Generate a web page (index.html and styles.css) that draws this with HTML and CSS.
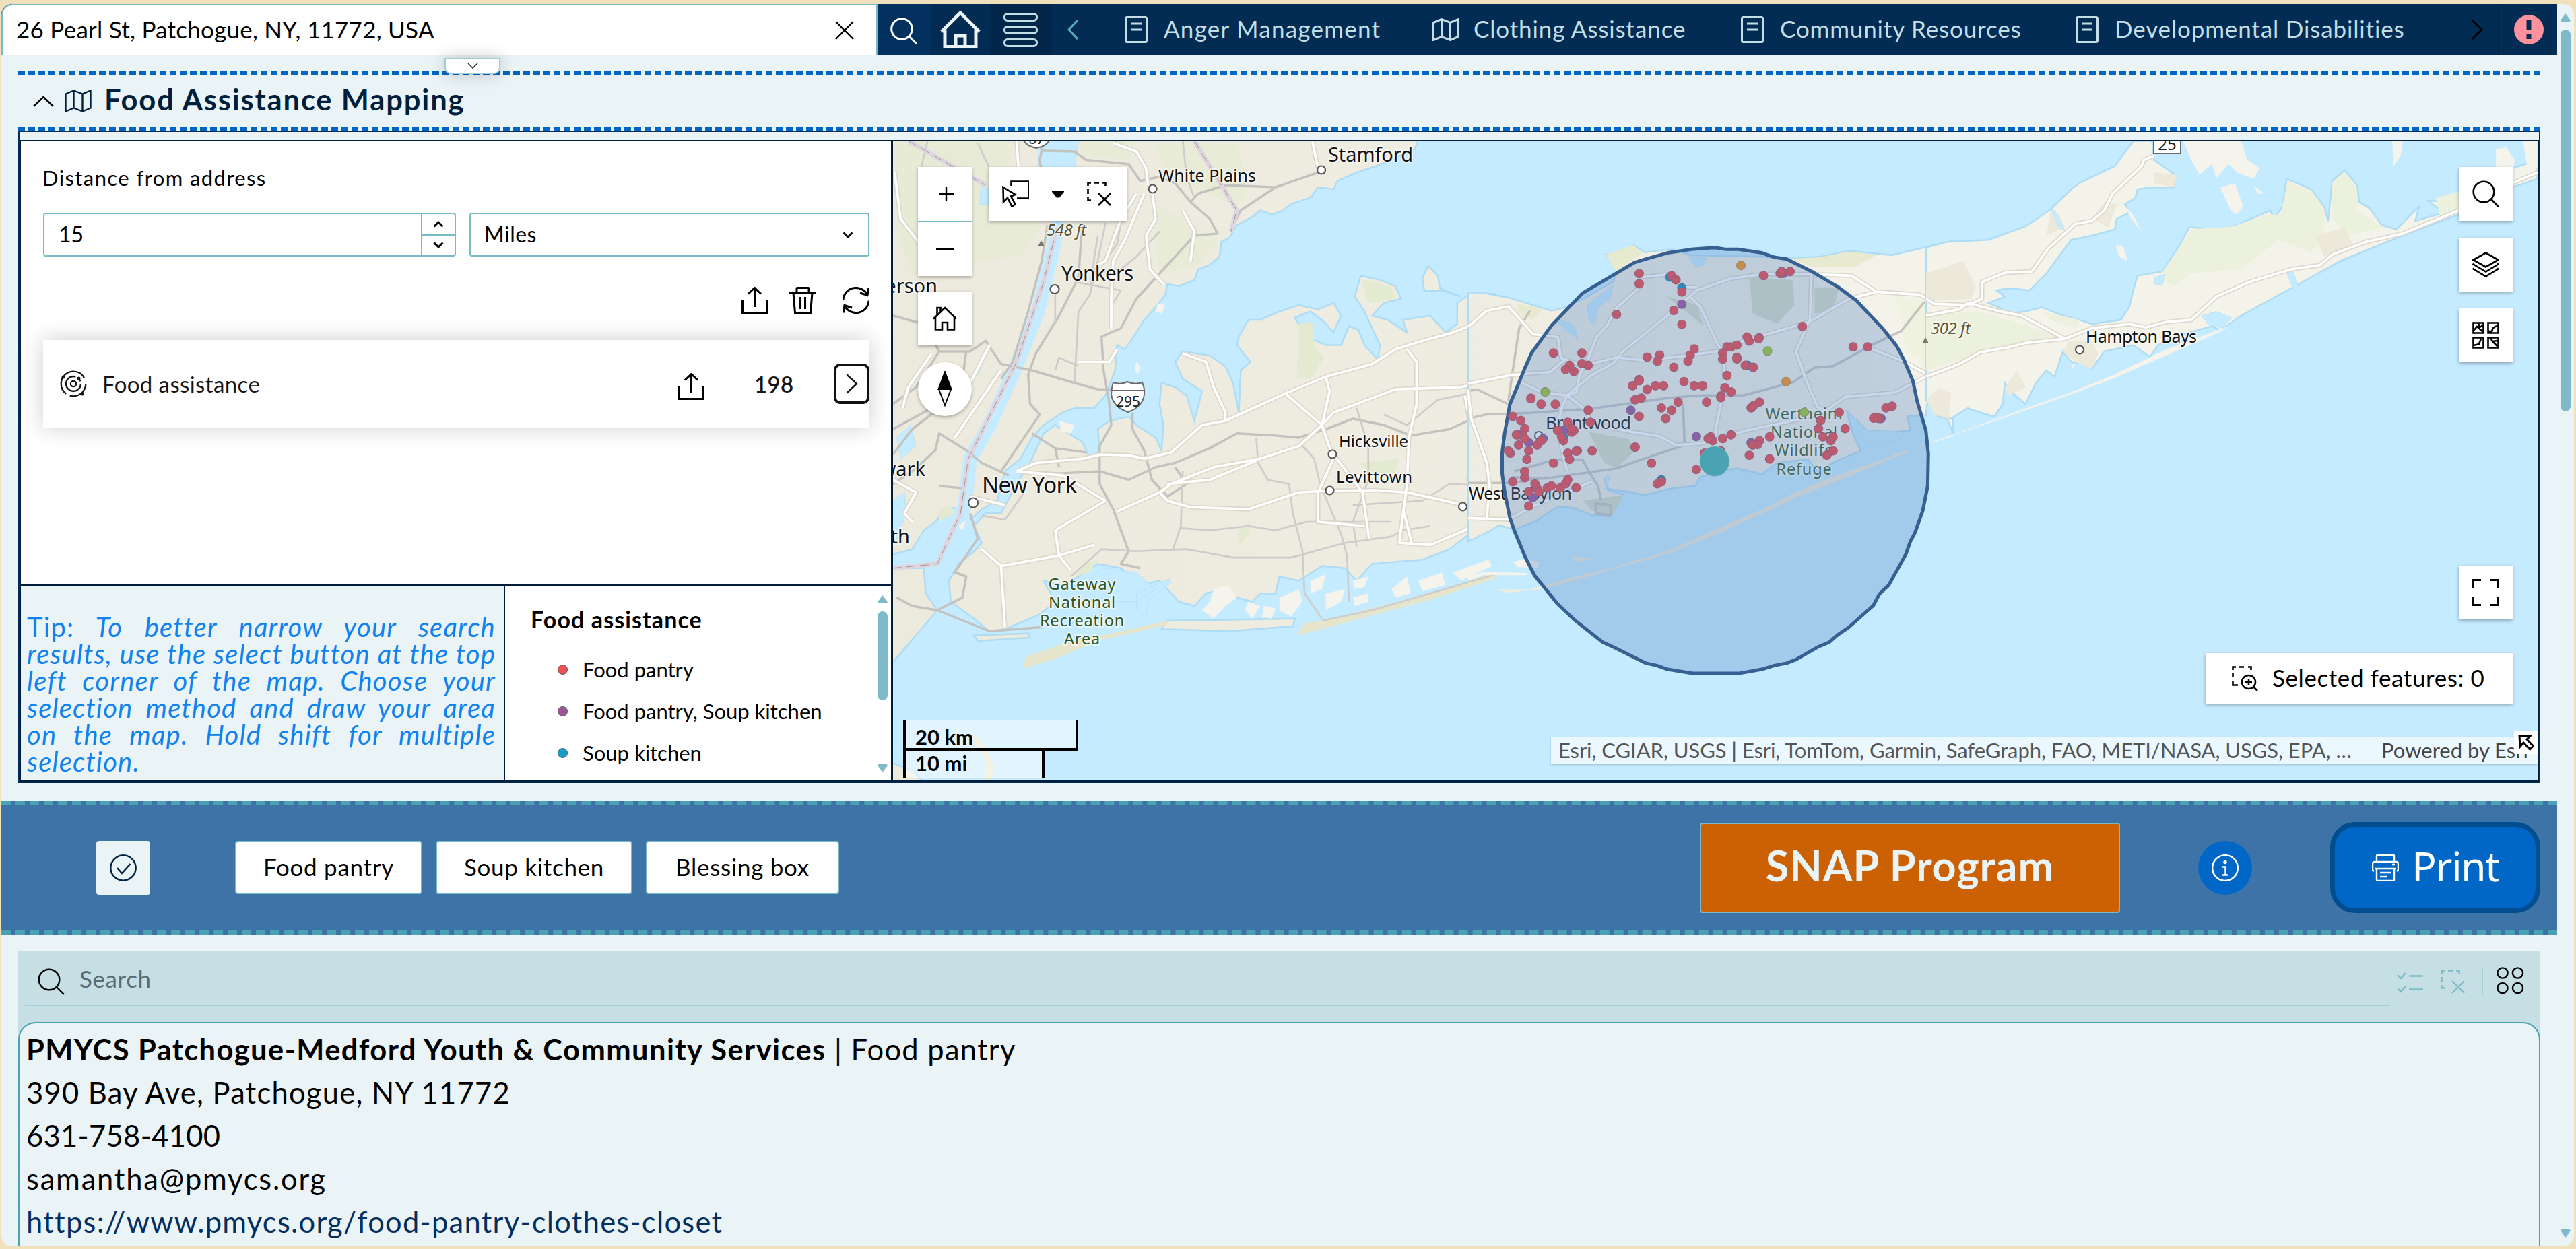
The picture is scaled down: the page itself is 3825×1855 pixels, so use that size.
FILE: index.html
```html
<!DOCTYPE html>
<html lang="en">
<head>
<meta charset="utf-8">
<title>Food Assistance Mapping</title>
<link rel="stylesheet" href="styles.css">
</head>
<body>
<svg class="defs" width="0" height="0">
  <symbol id="i-search" viewBox="0 0 40 40"><circle cx="17" cy="17" r="15.3"/><path d="M28 28l11 11"/></symbol>
  <symbol id="i-map" viewBox="0 0 40 34"><path d="M1.5 6.500l12-5 13 5 12-5v26l-12 5-13-5-12 5zM13.500 1.500v26M26.500 6.500v26"/></symbol>
  <symbol id="i-doc" viewBox="0 0 34 40"><rect x="1.500" y="1.500" width="31" height="37" rx="2"/><path d="M9 11h16M9 20h16"/></symbol>
  <symbol id="i-upload" viewBox="0 0 40 40"><path d="M1.500 20v18.500h36V20M19.500 30V2M10 10.500l9.500-9 9.500 9"/></symbol>
  <symbol id="i-unselect" viewBox="0 0 36 36"><path d="M1.500 6V1.500H6M11 1.500h7M23 1.500h4.500V6M1.500 11v7M1.500 23v4.500H6M17 17l18 18M35 17L17 35"/></symbol>
</svg>
<div class="frame">
  <main class="main">
    <header class="topbar">
      <div class="address"><span class="t address-text">26 Pearl St, Patchogue, NY, 11772, USA</span>
        <svg class="clear" viewBox="0 0 28 28"><path d="M1 1l26 26M27 1L1 27"/></svg></div>
      <div class="top-search"><svg width="40" height="40"><use href="#i-search"/></svg></div>
      <div class="top-home"><svg width="60" height="56" viewBox="0 0 60 56"><path d="M2 31L30 3l28 28M7 27v26.500h46V27M23 53V37h14v16"/></svg></div>
      <div class="top-menu"><i></i><i></i><i></i></div>
      <nav class="nav">
        <svg class="nav-prev" viewBox="0 0 16 30"><path d="M15 1L2 15l13 14"/></svg>
        <a class="n1"><svg width="34" height="40"><use href="#i-doc"/></svg><span class="t">Anger Management</span></a>
        <a class="n2"><svg width="40" height="34"><use href="#i-map"/></svg><span class="t">Clothing Assistance</span></a>
        <a class="n3"><svg width="34" height="40"><use href="#i-doc"/></svg><span class="t">Community Resources</span></a>
        <a class="n4"><svg width="34" height="40"><use href="#i-doc"/></svg><span class="t">Developmental Disabilities</span></a>
        <svg class="nav-next" viewBox="0 0 18 30"><path d="M2 1l14 14L2 29"/></svg>
      </nav>
      <div class="alert"><svg width="44" height="44" viewBox="0 0 44 44"><circle cx="22" cy="22" r="22"/><path d="M18.500 7h7v16h-7zM18.500 29h7v7h-7z"/></svg></div>
      <div class="pull-tab"><svg width="16" height="9" viewBox="0 0 16 9"><path d="M1 1l7 7 7-7"/></svg></div>
    </header>

    <section class="title-row">
      <svg class="fold" viewBox="0 0 31 17"><path d="M1 16L15.500 2 30 16"/></svg>
      <svg class="title-map" width="40" height="34"><use href="#i-map"/></svg>
      <h1 class="t">Food Assistance Mapping</h1>
    </section>

    <section class="workspace">
      <div class="panes">
        <div class="left">
          <div class="query">
            <label class="t">Distance from address</label>
            <div class="fields">
              <div class="number"><span class="t">15</span><div class="steps">
                <b><svg width="16" height="10" viewBox="0 0 16 10"><path d="M1.500 8.500L8 2l6.500 6.500"/></svg></b>
                <b><svg width="16" height="10" viewBox="0 0 16 10"><path d="M1.500 1.500L8 8l6.500-6.500"/></svg></b></div></div>
              <div class="select"><span class="t">Miles</span><svg width="16" height="10" viewBox="0 0 16 10"><path d="M1.500 1.500L8 8l6.500-6.500"/></svg></div>
            </div>
            <div class="actions">
              <svg width="40" height="40"><use href="#i-upload"/></svg>
              <svg width="40" height="40" viewBox="0 0 40 40"><path d="M0 8.500h40M11 8V2.500q0-1 1-1h16q1 0 1 1V8M6 9l2.500 29.500h23L34 9M16.500 15v18M23.500 15v18"/></svg>
              <svg width="40" height="40" viewBox="0 0 40 40"><path d="M1 19.500A19 19 0 0 1 37 12M38.800 1.500L37 12.500l-11-3.500M39 20.500A19 19 0 0 1 3 28M1.200 38.500L3 27.500 14 31"/></svg>
            </div>
            <div class="result">
              <svg class="target" width="40" height="40" viewBox="0 0 40 40"><circle cx="20" cy="20" r="4.200"/><circle cx="20" cy="20" r="11" stroke-dasharray="55 6 4 4.100"/><circle cx="20" cy="20" r="18.300" stroke-dasharray="34 6 65 10"/><circle class="dot" cx="28" cy="12" r="2.500"/><circle class="dot" cx="5" cy="10" r="2.500"/><circle class="dot" cx="33" cy="35" r="2.500"/></svg>
              <span class="t result-name">Food assistance</span>
              <svg class="result-up" width="40" height="40"><use href="#i-upload"/></svg>
              <span class="t result-count">198</span>
              <div class="result-open"><svg width="18" height="30" viewBox="0 0 18 30"><path d="M1.500 1.500L16 15 1.500 28.500"/></svg></div>
            </div>
          </div>
          <div class="lower">
            <div class="tip">
              <div><span class="upright">Tip:</span> To better narrow your search</div>
              <div>results, use the select button at the top</div>
              <div>left corner of the map. Choose your</div>
              <div>selection method and draw your area</div>
              <div>on the map. Hold shift for multiple</div>
              <div class="last"><span class="t">selection.</span></div>
            </div>
            <div class="legend">
              <div class="legend-body">
                <h2><span class="t">Food assistance</span></h2>
                <p><i class="red"></i><span class="t">Food pantry</span></p>
                <p><i class="purple"></i><span class="t">Food pantry, Soup kitchen</span></p>
                <p><i class="blue"></i><span class="t">Soup kitchen</span></p>
              </div>
              <div class="bar legend-bar"><i class="up"></i><i class="thumb"></i><i class="down"></i></div>
            </div>
          </div>
        </div>
        <div class="map">
          <svg class="basemap" viewBox="1326 210 2442 949">
            <defs>
              <linearGradient id="land" gradientUnits="userSpaceOnUse" x1="0" y1="0" x2="1568" y2="0"><stop offset="0" stop-color="#ece9dd"/><stop offset="1" stop-color="#efece1"/></linearGradient>
              <linearGradient id="land-mid" gradientUnits="userSpaceOnUse" x1="0" y1="0" x2="1568" y2="0"><stop offset="0" stop-color="#efece1"/><stop offset="1" stop-color="#f4f3ea"/></linearGradient>
              <marker id="m-red" markerUnits="userSpaceOnUse" markerWidth="34" markerHeight="36" refX="17" refY="18"><ellipse cx="17" cy="18" rx="14" ry="14.800" fill="#be5a6f" stroke="#96607c" stroke-width="2.500"/></marker>
              <marker id="m-blue" markerUnits="userSpaceOnUse" markerWidth="34" markerHeight="36" refX="17" refY="18"><ellipse cx="17" cy="18" rx="14" ry="14.800" fill="#2b8abd" stroke="#46799f" stroke-width="2.500"/></marker>
              <marker id="m-purple" markerUnits="userSpaceOnUse" markerWidth="34" markerHeight="36" refX="17" refY="18"><ellipse cx="17" cy="18" rx="14" ry="14.800" fill="#8862a8" stroke="#776596" stroke-width="2.500"/></marker>
              <marker id="m-orange" markerUnits="userSpaceOnUse" markerWidth="34" markerHeight="36" refX="17" refY="18"><ellipse cx="17" cy="18" rx="14" ry="14.800" fill="#c98c4c" stroke="#9a8068" stroke-width="2.500"/></marker>
              <marker id="m-green" markerUnits="userSpaceOnUse" markerWidth="34" markerHeight="36" refX="17" refY="18"><ellipse cx="17" cy="18" rx="14" ry="14.800" fill="#89b05c" stroke="#78936c" stroke-width="2.500"/></marker>
            </defs>
            <rect x="1326" y="210" width="2442" height="949" fill="#c4ebff"/>
            <!-- New York and western Long Island -->
            <g transform="translate(1320 200) scale(.574 .625)">
              <g class="land">
                <path d="M0 0H1375L1360 35 1310 55 1260 75 1210 90 1160 110 1150 130 1110 125 1090 150 1040 165 1020 180 990 190 960 180 940 195 900 215 880 245 860 255 855 290 830 310 800 320 790 345 750 360 720 355 715 380 690 410 660 440 640 470 610 510 590 500 585 560 560 620 530 650 480 650 450 660 400 690 370 720 340 770 300 800 280 870 240 890 210 915 190 890 150 885 120 920 90 940 60 985 0 1000Z"/>
                <path d="M290 900L330 830 370 770 400 710 430 690 500 730 520 770 545 750 540 700 570 680 620 670 640 690 690 720 705 750 710 690 700 640 705 590 740 600 770 620 790 680 810 610 760 580 740 540 760 515 830 525 870 550 890 590 905 660 910 560 935 540 900 500 905 480 930 440 960 440 1010 420 1060 405 1110 415 1150 400 1170 430 1150 470 1120 440 1090 420 1050 435 1080 480 1130 500 1170 500 1190 455 1215 465 1230 500 1265 535 1270 500 1250 460 1230 420 1205 385 1220 335 1270 345 1310 360 1325 390 1280 400 1250 430 1290 440 1340 470 1330 440 1400 430 1440 470 1470 450 1470 400 1500 380 1568 378V935L1530 920 1500 950 1450 985 1380 1010 1310 1015 1250 1020 1210 1060 1180 1030 1120 1025 1060 1060 1010 1050 1000 1090 960 1090 940 1110 900 1100 870 1080 820 1090 790 1120 750 1110 700 1060 650 1070 600 1030 540 1020 490 1050 450 1070 400 1060 430 1110 390 1140 300 1175 260 1180 220 1150 160 1110 155 1060 180 1020 220 990 240 970 220 930 250 900Z"/>
                <path d="M0 1030L90 1030 95 1090 125 1130 60 1200 0 1265ZM220 1190L360 1185 365 1195 230 1203ZM705 1175L720 1155 1050 1150 1045 1168 880 1180ZM1380 340L1395 312 1420 335 1425 365 1480 385 1430 370 1385 372ZM0 1490L60 1510 90 1540 0 1540Z"/>
              </g>
              <path fill="#e6e5cb" d="M345 1270L355 1240 450 1210 600 1180 720 1155 720 1165 550 1200 430 1245ZM1055 1190L1075 1160 1130 1155 1250 1125 1400 1090 1568 1040V1055L1400 1105 1200 1155ZM210 1420L240 1440 270 1500 265 1535 245 1530 250 1490Z"/>
              <path fill="#e6ebd3" d="M10 15H320L300 150 390 220 340 290 200 300 60 330 10 200ZM490 15H640L620 60 500 50ZM690 20H900L930 130 900 170 720 100ZM680 160L850 250 800 310 700 330Z" opacity=".75"/>
              <path fill="#e3ead0" d="M1060 450L1095 445 1100 500 1125 530 1090 580 1055 580ZM1225 345L1300 360 1310 390 1240 400ZM1215 780L1320 770 1310 800 1270 825ZM905 940L935 920 930 950 905 975ZM1490 810L1510 812 1505 825 1490 822ZM130 890L160 880 170 900 130 920ZM500 1020L540 1010 520 1040 480 1050Z"/>
              <path class="water" d="M388 15H490L480 82 395 100 385 60ZM238 120L260 130 262 168 235 165ZM550 1030L640 1040 690 1080 640 1110 560 1110 500 1080ZM640 1090L725 1055 730 1065 670 1105 665 1145 640 1130ZM10 870L40 850 45 900 20 960 10 960ZM20 720L55 690 70 740 30 770ZM255 500L262 505 230 570 215 580Z"/>
              <path fill="none" stroke="#c4ebff" stroke-width="36" d="M440 200L425 270 385 420 325 560 260 690 210 770 200 850 185 940"/>
              <path class="land2" d="M440 680L480 690 470 710 445 705ZM840 1080L880 1070 900 1100 870 1120 840 1150 810 1130 830 1110ZM930 1110L960 1120 940 1150 920 1130ZM1010 1100L1060 1080 1070 1110 1040 1145 1010 1130ZM1090 1060L1130 1045 1120 1080 1090 1090ZM1130 1090L1180 1080 1170 1110 1130 1130ZM1200 1060L1240 1050 1230 1075 1205 1080ZM1200 1100L1240 1090 1240 1110 1205 1120ZM1300 1080L1340 1050 1350 1090 1310 1100ZM1370 1060L1430 1040 1440 1070 1380 1085ZM1460 1040L1550 1010 1560 1025 1480 1060ZM640 540L650 550 645 570 635 560ZM695 400L715 405 705 425 690 420ZM180 930L200 915 190 940ZM970 1120L1000 1125 990 1150 965 1145Z"/>
              <g class="gray">
                <path d="M10 430L90 450 130 515 210 515 250 490 290 545 370 560 480 590 540 605 575 605M390 15L395 38 480 40 510 60 620 70 650 110 700 100 740 115 780 160 830 200 850 235 790 240 740 290 640 390 600 460 550 480 555 560 570 640 575 690 545 740 545 830 580 890 620 990 600 1020 650 1030M400 15L390 60 405 150M410 215L395 300 360 420 320 540 290 580M500 210L490 340 440 430 380 520 360 570 365 640 390 665 290 800M370 710L430 745 510 755M430 745L440 790M345 800L440 805 545 800 620 820 690 790 740 780 830 745 900 710 1000 715 1060 720 1130 700 1200 675 1280 690 1350 715 1450 700 1520 670 1568 665M630 660L630 700 660 750 680 820 720 860 770 830 740 790"/>
                <path d="M780 160L800 140 870 120 1000 125 1110 90M890 215L910 180 1000 125M10 760L60 700 130 650 200 600M10 830L60 800 120 750 130 710 200 750 240 780 310 810M130 835L190 840M20 1100L60 1120 125 1130 190 1100 200 1050 170 1040 230 960 210 900M125 1130L260 1180 400 1170M130 515L70 600 10 640M200 515L190 580 130 640 10 700"/>
              </g>
              <g class="gray thin">
                <path d="M470 1050L550 985 640 990 770 985 890 1005 1040 1005 1180 970 1300 955 1330 940 1400 930M760 800L755 930 735 985M755 935L830 940 930 930 1000 940 1080 920 1300 920M950 720L955 780 980 820 1035 830 1045 900 1070 990 1075 1090 1120 1150M1070 740L1100 770 1115 830 1170 950 1185 1000 1190 1110M1210 650L1240 740 1240 820 1200 920 1210 980M1200 880L1380 870 1450 830 1568 835M1280 665L1340 690 1420 630 1500 615 1568 625M560 210L540 300 520 380 490 420 480 590M600 210L590 260 560 300M430 560L440 530 490 550M430 450L430 360M480 350L600 370 580 400M540 240L520 360M700 230L640 290 600 320 530 330M100 15L80 90M230 20L270 100M1120 1155L1250 1130 1400 1090 1568 1045M240 905L300 915 350 850M760 15L770 100 790 150"/>
              </g>
              <g class="casing"><path id="wa" d="M330 800L380 780 500 770 550 760 620 762 660 770 730 755 810 690 870 680 1025 615 1130 575 1250 545 1310 510 1380 490 1460 470 1500 455 1568 415M330 800L450 810 560 870M590 895L700 850 730 830 840 790 960 770 1060 740 1120 690 1150 660 1210 640 1310 605 1480 600 1568 580M720 830L830 820 950 775M700 850L720 870 780 885 930 890 1060 850 1140 846 1260 845 1340 850 1440 870 1485 880M1130 575L1140 610 1120 690 1150 770 1110 850 1110 920 1230 930M1150 760L1225 850 1242 960M1025 615L1120 690M1340 510L1365 540 1365 640 1345 720 1340 830 1320 970 1400 975 1490 940 1530 910 1568 915M1330 890L1352 970M560 870L430 940 440 1000 290 1025 300 1170M240 985L290 1025M440 1000L530 975M440 1000L470 1035M575 380V460M490 540H570L590 510M760 520L820 540 840 600 870 660V680M1490 620L1510 720 1540 820 1550 900M640 140L600 200 560 300 540 310M660 140L610 250 580 300 575 380M680 130L690 200 665 240 675 320 710 355M580 20L640 40 665 80 670 120M330 15L335 80M1095 15L1110 80M760 180L790 230 780 300M15 90L30 200 80 260M110 520L50 600 35 650M260 500L210 590M290 560L170 720M10 820L70 850 40 900 60 920M210 860L300 880"/></g>
              <use href="#wa" class="white"/>
              <path class="border" d="M50 15L250 120M435 220L400 350 330 540 205 770 185 900 125 1020 10 1030M790 15L900 180 885 230"/>
              <path class="border-line" d="M50 15L250 120M435 220L400 350 330 540 205 770 185 900 125 1020 10 1030M790 15L900 180 885 230"/>
            </g>
            <!-- Suffolk County -->
            <g transform="translate(2180 340) scale(.4592 .4337)">
              <g class="land mid">
                <path d="M0 218L45 218 130 235 270 280 310 270 380 235 470 180 480 140 445 88 490 85 535 55 570 80 660 70 720 90 950 95 1050 100 1140 95 1230 75 1370 90 1568 40V700L1530 600 1520 555 1490 545 1480 640 1420 640 1430 690 1380 695 1290 690 1225 625 1240 690 1270 760 1200 790 1130 830 1100 790 1000 800 950 840 870 820 800 830 750 850 735 880 650 890 570 912 520 900 450 890 440 850 455 895 500 910 470 960 460 985 400 980 340 955 290 950 220 1000 150 1030 100 1015 60 1040 0 1070Z"/>
              </g>
              <path fill="#e8ead0" d="M445 88L535 55 560 85 500 130 480 150ZM1040 102L1140 97 1230 77 1320 90 1250 130 1110 130ZM160 255L240 275 210 310 160 290Z"/>
              <path fill="#eef2df" d="M1380 230L1500 250 1540 360 1500 480 1420 420Z"/>
              <path fill="#d5dcc5" d="M910 165L1050 175 1055 260 1000 325 920 290ZM1120 200L1200 200 1180 280 1120 290ZM390 695L520 720 540 760 480 820 440 800ZM370 930L480 915 500 915 465 985 400 965ZM640 230L740 260 760 330 700 280Z"/>
              <path class="water" d="M385 260L470 190 460 240 420 270 410 330 390 310ZM280 310L330 320 350 350 356 378 320 350ZM710 95L770 100 760 125 735 130ZM1225 625L1290 690 1380 692 1400 720 1300 740 1250 700ZM440 850L460 840 450 885Z"/>
              <path fill="#efeddd" d="M75 1235L200 1235 350 1190 480 1155 650 1100 820 1020 950 960 1060 900 1200 840 1340 790 1420 755 1420 765 1250 840 1050 925 850 1025 660 1108 450 1172 250 1232 130 1245ZM330 1120L400 1130 360 1140Z"/>
              <path class="land2" d="M0 1190L50 1175 190 1178 190 1186 50 1186 0 1205ZM145 1140L180 1130 230 1140 225 1160 160 1158ZM1420 757L1568 705V710ZM20 1150L70 1135 60 1160Z"/>
              <g class="gray"><path d="M0 650L60 635 200 630 400 615 640 580 750 570 890 570 1050 525 1120 475 1180 470 1310 395 1400 350 1475 250M140 850L250 855 480 820 560 790 700 740 695 600M150 830L280 790 370 790 390 830 420 880 430 930M410 940L460 945 462 980 415 975ZM130 600L30 550 0 555M130 590L145 480 165 340 200 280M0 870H140L260 850"/></g>
              <g class="casing"><path id="wb" d="M0 335L60 280 130 265 210 360 290 370 300 440 310 450 265 490 140 500 0 530M300 440L370 470 480 440 570 450 700 435 830 415 840 405 900 380 1100 320 1230 240 1320 215 1460 225 1510 255 1568 265M160 520L240 560 320 570 400 500 470 460 500 420 640 300 740 210 850 170 950 155 1120 155 1240 160 1320 215M560 165L650 155 700 200 740 200M555 200L480 270 450 330 415 370 390 440 360 500 350 560 320 570 300 620 290 690 320 830M715 230L750 265 800 380 825 430 830 530 800 690 800 710M1110 160L1105 310 1060 420 1090 510 1130 610 1170 630M320 570L380 620 400 670 530 695 620 710 670 740 750 735 900 690 1060 655 1160 620 1220 575 1380 560 1490 500 1568 460M1290 405L1400 450 1490 500M0 990L130 995 210 950 400 865M0 550L10 650 60 800 70 880 60 990"/></g>
              <use href="#wb" class="white"/>
            </g>
            <!-- North and South Forks -->
            <g transform="translate(2860 200) scale(.6154 .625)">
              <g class="land east">
                <path d="M0 268L50 255 150 250 240 218 300 178 350 130 370 115 455 75 500 15 545 15 550 60 600 95 600 125 540 125 510 130 505 150 480 165 490 185 460 200 455 225 400 240 350 250 320 290 290 330 250 370 200 365 170 370 190 385 150 400 175 410 200 425 240 420 280 410 330 430 370 440 400 450 470 440 490 410 500 370 510 335 570 325 610 265 635 220 700 225 750 215 830 180 840 200 860 170 870 105 930 130 960 170 970 205 980 110 1010 85 1040 120 1045 160 1070 175 1100 215 1135 225 1190 170 1180 205 1250 185 1210 157 1260 160 1285 135 1370 95 1475 60V105L1415 125 1285 190 1150 240 1000 300 890 360 760 430 710 465 690 455 600 480 560 500 540 528 500 500 430 515 400 557 380 545 350 540 330 515 310 575 290 560 265 590 240 640 215 620 190 590 185 640 165 670 130 660 100 650 60 675 30 670 10 640 0 630Z"/>
              </g>
              <path class="land2" d="M8 734L190 668 350 612 450 572 575 512 730 455 710 468 590 520 450 580 350 617 190 672ZM620 15L760 15 775 60 805 80 790 105 750 90 730 70 700 104 690 70 660 95 640 60ZM710 125L745 115 765 170 750 190 735 180ZM458 262L475 265 487 300 465 290ZM1125 15L1150 15 1145 50 1128 75ZM1375 35L1400 30 1420 60 1415 90 1375 90ZM1440 15L1475 15 1475 80 1450 75ZM350 550L360 542 356 556ZM480 170L500 190 520 230 495 200ZM790 120L815 140 800 140Z"/>
              <path fill="#ecf1dd" d="M640 225L740 218 820 190 855 190 872 112 930 135 960 175 960 240 930 280 850 250 760 320 640 330 600 360 560 340 610 270ZM980 115L1010 90 1040 130 1040 180 1100 220 1020 240 980 200ZM0 430L120 420 200 440 320 480 200 500 100 530 0 560ZM1230 150L1285 135V175L1240 195ZM280 420L370 440 360 460 300 440Z"/>
              <path fill="#ece8da" d="M0 330L90 300 120 360 110 390 0 395ZM300 185L320 190 335 220 290 240ZM550 90L605 95 600 125 550 115ZM330 515L345 490 400 490 415 520 400 557 360 540ZM0 630L30 600 60 615 55 675 20 665ZM940 240L1010 220 1030 260 960 290ZM430 160L460 165 440 220 400 200ZM190 600L220 560 240 600 200 620Z"/>
              <path class="water" d="M302 178L312 182 335 228 320 220ZM870 328L885 325 900 365 888 370ZM665 430L700 420 738 435 715 460 680 450ZM550 340L575 332 570 358 552 355Z"/>
              <g class="casing"><path id="wc" d="M0 430L80 415 100 400 180 420 230 430 335 485 400 460 490 450 530 458 580 445 640 440 700 385 780 350 880 320 950 310 980 285 1060 255 1150 235 1285 180M0 390L20 402 100 405 135 390 135 350 190 328 255 325 295 270 340 230 360 212 400 205 430 180 450 140 520 75 525 60 550 50M0 575L80 545 130 517 200 505 240 495 335 485M1415 115L1475 90"/></g>
              <use href="#wc" class="white"/>
            </g>
            <!-- Route shields -->
            <g class="shield">
              <path d="M1653 568q11 4 21-1 11 5 22 1 4 9 3 18-2 18-24 26-22-7-25-26 0-9 3-18z"/><path d="M1651 580h48"/>
              <path d="M1518 200q0 16 21 20 21-4 21-20z"/><path d="M3198 200h40v28h-40z"/>
              <text x="1675" y="604" font-size="21" text-anchor="middle">295</text>
              <text x="1539" y="214" font-size="20" text-anchor="middle">87</text>
              <text x="3218" y="223" font-size="24" text-anchor="middle">25</text>
            </g>
            <g class="town"><circle cx="1711.500" cy="280.500" r="6"/><circle cx="1962" cy="252.500" r="6"/><circle cx="1566" cy="429.500" r="6.500"/><circle cx="1445" cy="746.500" r="7"/><circle cx="1978.500" cy="674.500" r="6"/><circle cx="1974.500" cy="728.500" r="6"/><circle cx="2172" cy="752.500" r="6"/><circle cx="3088" cy="519.500" r="6"/><circle cx="2285" cy="647" r="6"/></g>
            <g class="peak"><path d="M1546 357l-5 9h10zM2859 501l-5 9h10z"/></g>
            <g class="label">
              <text x="1972" y="240" font-size="29" textLength="126">Stamford</text>
              <text x="1720" y="270" font-size="25" textLength="145">White Plains</text>
              <text x="1576" y="417" font-size="30" textLength="107">Yonkers</text>
              <text x="1458" y="732" font-size="33" textLength="141">New York</text>
              <text x="1988" y="664" font-size="24" textLength="103">Hicksville</text>
              <text x="1984" y="717" font-size="24" textLength="113">Levittown</text>
              <text x="2181" y="742" font-size="25" textLength="153">West Babylon</text>
              <text x="2295" y="637" font-size="26" textLength="127">Brentwood</text>
              <text x="3097" y="509" font-size="25" textLength="165">Hampton Bays</text>
              <text x="1392" y="435" font-size="29" text-anchor="end">erson</text>
              <text x="1374" y="707" font-size="29" text-anchor="end">wark</text>
              <text x="1351" y="807" font-size="29" text-anchor="end">th</text>
            </g>
            <g class="label elev"><text x="1554" y="350" font-size="24" textLength="59">548 ft</text><text x="2867" y="496" font-size="24" textLength="59">302 ft</text></g>
            <g class="label park">
              <text x="1607" y="876">Gateway</text><text x="1607" y="903">National</text><text x="1607" y="930">Recreation</text><text x="1607" y="957">Area</text>
              <text x="2679" y="623">Wertheim</text><text x="2679" y="650">National</text><text x="2679" y="677">Wildlife</text><text x="2679" y="705">Refuge</text>
            </g>
            <!-- Search radius and locations -->
            <g transform="translate(2180 340) scale(.4592 .4337)">
              <path class="radius" d="M797 64L722 70 645 82 575 103 538 115 370 220 315 280 270 330 205 425 180 485 155 550 135 600 118 700 110 765V838L118 900 135 990 150 1035 185 1125 215 1187 290 1285 345 1340 435 1415 470 1432 575 1487 610 1495 645 1508 725 1522H875L950 1508 990 1495 1030 1487 1060 1475 1130 1432 1168 1415 1195 1390 1230 1365 1310 1290 1330 1250 1360 1220 1415 1115 1430 1070 1445 1040 1470 965 1486 880 1488 770 1480 690 1452 590 1438 520 1410 450 1385 400 1340 340 1255 245 1195 198 1110 145 1030 103 990 97 950 82 875 70 835 70Z"/>
              <polyline class="pin blue-pin" points="652,165 691,202 903,467 625,859 308,712"/>
              <polyline class="pin purple-pin" points="691,258 1020,152 526,621 738,711 915,732 308,690 242,718 196,732 209,920 1335,649"/>
              <polyline class="pin orange-pin" points="882,125 1028,523"/>
              <polyline class="pin green-pin" points="968,418 249,558 1087,628"/>
              <polyline class="pin red-pin" points="553,153 553,188 658,160 672,174 691,216 480,293 665,279 691,327 955,160 1009,153 1014,146 1041,146 1081,334 276,425 368,425 388,467 368,461 328,467 315,481 342,488 619,432 579,439 612,453 731,411 718,432 711,453 665,474 553,516 553,520 532,537 579,550 606,537 632,537 698,523 731,537 758,537 837,404 850,404 869,398 823,425 823,446 869,440 869,445 909,384 902,370 941,373 939,376 896,467 922,474 837,502 830,544 850,558 817,572 817,578 771,593 560,579 540,585 679,593 625,613 658,621 639,649 553,642 203,579 203,582 236,600 282,600 388,621 395,662 144,642 170,656 183,684 176,705 163,705 156,705 183,718 163,740 223,740 236,725 196,760 190,789 136,768 130,760 322,662 335,696 342,690 335,684 289,690 308,725 302,712 322,768 353,760 349,761 401,760 328,789 276,802 540,747 593,802 625,866 612,873 738,824 764,768 784,712 791,725 776,718 823,718 850,705 817,760 942,593 915,613 922,606 1200,628 1140,656 1133,684 1147,712 1173,725 1180,712 1219,684 1180,760 1160,775 975,712 942,725 936,738 920,740 909,775 975,788 1245,404 1292,404 1351,613 1371,607 1328,649 1322,645 1311,648 144,866 183,852 183,831 216,873 222,887 229,900 196,900 256,887 269,880 298,887 315,873 322,859 349,886 196,949"/>
              <ellipse cx="797" cy="796" rx="47.500" ry="50.500" fill="#4aa3b3" stroke="#6cb3ac" stroke-width="2"/>
            </g>
          </svg>

          <div class="tools-left">
            <div class="zoom"><b><svg width="24" height="24" viewBox="0 0 24 24"><path d="M12 1v22M1 12h22"/></svg></b><b><svg width="26" height="4" viewBox="0 0 26 4"><path d="M0 2h26"/></svg></b></div>
            <div class="tile"><svg width="36" height="36" viewBox="0 0 36 36"><path d="M1 18.500L18 2l17 16.500M4 16v18.500h10V24h8v10.500h10V16M6.500 13V2h5v6"/></svg></div>
            <div class="compass"><svg width="22" height="54" viewBox="0 0 22 54"><path fill="#000" d="M11 1L1.500 27h19z"/><path d="M11 51L2 27h18z"/></svg></div>
          </div>
          <div class="selector">
            <svg width="40" height="40" viewBox="0 0 40 40"><path d="M13.500 8V1.500h26v25H22M1.500 10l18 11-6.500 2.500 6.500 12-5 3L8 26l-6 6z"/></svg>
            <svg width="18" height="11" viewBox="0 0 18 11"><path fill="#000" stroke="none" d="M0 0h18v2l-7 8.500H7L0 2z"/></svg>
            <svg width="36" height="36"><use href="#i-unselect"/></svg>
          </div>
          <div class="tools-right">
            <div class="tile"><svg width="40" height="40"><use href="#i-search"/></svg></div>
            <div class="tile"><svg width="40" height="38" viewBox="0 0 40 38"><path d="M20 1.500L38.500 12 20 22.500 1.500 12zM3 17.500l-1.500 1L20 29.500l18.500-11-1.500-1M3 24.500l-1.500 1L20 36.500l18.500-11-1.500-1"/></svg></div>
            <div class="tile"><svg width="40" height="40" viewBox="0 0 40 40"><path d="M1.500 1.500h15v15h-15zM23.500 1.500h15v15h-15zM1.500 23.500h15v15h-15zM23.500 23.500h15v15h-15zM2 13l5-6 9 8M9 2l2 6 5-3M24 14h5q1-7 9-8M2 35l8-2 3-8M27 24l3 5 8 8M38 28l-8 1"/></svg></div>
          </div>
          <div class="tile full"><svg width="40" height="40" viewBox="0 0 40 40"><path d="M1.500 13V1.500H13M27 1.500h11.500V13M38.500 27v11.500H27M13 38.500H1.500V27"/></svg></div>
          <div class="selected"><svg width="40" height="40" viewBox="0 0 40 40"><path d="M2.500 7V2.500H7M12 2.500h7M25 2.500h4.500V7M2.500 12v6M2.500 24v5.500H10"/><circle cx="26" cy="25" r="10"/><path d="M33 32l6 6M26 20v10M21 25h10"/></svg><span class="t">Selected features: 0</span></div>
          <div class="credits"><span class="t sources">Esri, CGIAR, USGS | Esri, TomTom, Garmin, SafeGraph, FAO, METI/NASA, USGS, EPA, …</span><span class="t">Powered by Esri</span></div>
          <div class="corner"><svg width="24" height="24" viewBox="0 0 24 24"><path d="M2 2h16l-5 5 9.500 10-5 5L8 12l-5 6z"/></svg></div>
          <div class="scale"><div class="km"><span class="t">20 km</span></div><div class="mi"><span class="t">10 mi</span></div></div>
        </div>
      </div>
    </section>

    <section class="band">
      <div class="check"><svg width="40" height="40" viewBox="0 0 40 40"><circle cx="20" cy="20" r="18.700"/><path d="M11 20l7 8 12.500-14"/></svg></div>
      <button class="b1"><span class="t">Food pantry</span></button>
      <button class="b2"><span class="t">Soup kitchen</span></button>
      <button class="b3"><span class="t">Blessing box</span></button>
      <button class="snap"><span class="t">SNAP Program</span></button>
      <div class="info"><svg width="40" height="40" viewBox="0 0 40 40"><circle cx="20" cy="20" r="18.900"/><path d="M16 18.500h4.500V30M15.500 30.500h9"/><circle class="fill" cx="20" cy="11.500" r="2.700"/></svg></div>
      <button class="print"><svg width="40" height="40" viewBox="0 0 40 40"><path d="M7 11V2q0-1 1-1h24q1 0 1 1v9M3 25q-2-1-2-3v-8q0-3 3-3h32q3 0 3 3v8q0 2-2 3M4 21h32M7 21v17q0 1 1 1h24q1 0 1-1V21M12 27h16M12 33h10M30 15h4"/></svg><span class="t">Print</span></button>
    </section>

    <section class="results">
      <div class="finder">
        <div class="finder-input"><svg width="40" height="40"><use href="#i-search"/></svg><span class="t">Search</span></div>
        <div class="finder-tools">
          <svg class="soft checks" width="40" height="30" viewBox="0 0 40 30"><path d="M1 5l5 5 7-8M1 25l5 5 7-8M18 6.500h21M18 26.500h21"/></svg>
          <svg class="soft uns" width="36" height="36"><use href="#i-unselect"/></svg>
          <i></i>
          <svg width="40" height="40" viewBox="0 0 40 40"><circle cx="9" cy="9" r="7.600"/><circle cx="31.500" cy="9" r="7.600"/><circle cx="9" cy="31.500" r="7.600"/><circle cx="31.500" cy="31.500" r="7.600"/></svg>
        </div>
      </div>
      <article class="card">
        <p><strong class="t">PMYCS Patchogue-Medford Youth &amp; Community Services</strong><span class="t kind"> | Food pantry</span></p>
        <p><span class="t">390 Bay Ave, Patchogue, NY 11772</span></p>
        <p class="phone"><span class="t">631-758-4100</span></p>
        <p class="mail"><span class="t">samantha@pmycs.org</span></p>
        <p class="link"><span class="t">https://www.pmycs.org/food-pantry-clothes-closet</span></p>
      </article>
    </section>
  </main>
  <div class="bar page-bar"><i class="up"></i><i class="thumb"></i><i class="down"></i></div>
</div>
</body>
</html>
```
FILE: styles.css
```css
* { box-sizing: border-box; }
html, body { margin: 0; }
body {
  width: 3825px; height: 1855px; overflow: hidden;
  padding: 6px 3px 4px 2px; background: #f0e0bb;
  font-family: Lato, "Liberation Sans", sans-serif; color: #000;
}
svg { display: block; flex: none; fill: none; stroke: currentColor; stroke-width: 3; }
svg .fill, svg .dot { fill: currentColor; stroke: none; }
.defs { position: absolute; }
h1, h2, p { margin: 0; }
.t { white-space: nowrap; }

.frame { display: flex; width: 3820px; height: 1845px; border-radius: 16px; overflow: hidden; background: #eaf3f6; }
.main { width: 3795px; display: flex; flex-direction: column; }

/* Top bar */
.topbar { position: relative; flex: none; display: flex; height: 75px; background: #022c53; }
.address { width: 1301px; display: flex; align-items: center; justify-content: space-between; background: #fff; border: 2px solid #78bac6; border-bottom: 0; border-radius: 16px 0 0 0; padding: 0 33px 0 20px; font-size: 35px; letter-spacing: .25px; }
.address-text { padding-bottom: 4px; }
.clear { width: 28px; height: 28px; stroke-width: 2.4; }
.top-search { width: 79px; background: #02305f; color: #fff; padding: 20px 0 0 19px; }
.top-home { width: 88px; color: #eaf3f6; padding: 10px 0 0 14px; }
.top-home svg { stroke-width: 5; }
.top-menu { width: 92px; background: #01264a; padding: 13px 0 0 20px; display: flex; flex-direction: column; gap: 6px; }
.top-menu i { width: 51px; height: 13px; border: 3px solid #c3dfe5; border-radius: 6px; }
.nav { flex: 1; display: flex; align-items: center; color: #c3dfe5; font-size: 35px; letter-spacing: .85px; padding-left: 23px; }
.nav a { display: flex; align-items: center; gap: 24px; }
.nav .t { padding-bottom: 4px; }
.nav-prev { width: 16px; height: 30px; color: #5ba9b8; margin-right: 69px; }
.nav-next { width: 18px; height: 30px; color: #000; }
.n1 { width: 457px; letter-spacing: 1.25px; } .n2 { width: 458px; } .n3 { width: 497px; } .n4 { width: 587px; }
.nav .n2 { gap: 21px; }
.alert { width: 88px; border-left: 2px solid #012547; padding: 16px 0 0 22px; }
.alert svg { fill: #ff919d; stroke: none; }
.alert path { fill: #022c53; }
.pull-tab { position: absolute; left: 658px; top: 80px; width: 83px; height: 24px; background: #fff; border: 2px solid #a2cdd6; border-radius: 0 0 9px 9px; box-shadow: 0 0 24px rgba(0,0,0,.22); display: flex; justify-content: center; padding-top: 5px; color: #333; }
.pull-tab svg { stroke-width: 1.6; }

/* Section title */
.title-row { flex: none; display: flex; align-items: center; margin: 25px 25px 0; height: 88px; border: solid #0065c4; border-width: 5px 0; border-style: dashed none; color: #001f3d; padding-left: 22px; }
.fold { width: 31px; height: 17px; margin-right: 16px; color: #000; stroke-width: 2.5; }
.title-map { margin-right: 19px; stroke-width: 2.4; }
.title-row h1 { font-size: 43.5px; font-weight: 700; letter-spacing: 1.85px; padding-bottom: 6px; }

/* Workspace */
.workspace { flex: none; margin: 0 25px; height: 969px; border: 2px solid #002d5c; padding-top: 12px; }
.panes { display: flex; height: 953px; border: 2px solid #001d3a; }
.left { width: 1295px; border-right: 3px solid #001d3a; display: flex; flex-direction: column; }
.query { height: 658px; background: #fff; padding: 32px 32px 0 33px; }
.query label { display: block; font-size: 31px; line-height: 44px; letter-spacing: 1.4px; margin-left: -1px; }
.fields { display: flex; gap: 20px; margin-top: 30px; font-size: 32px; }
.fields .t { padding-bottom: 3px; }
.number { width: 613px; height: 65px; border: 2px solid #78bac6; border-radius: 4px; display: flex; align-items: center; justify-content: space-between; padding-left: 21px; }
.steps { width: 50px; height: 61px; border-left: 2px solid #78bac6; display: flex; flex-direction: column; }
.steps b { flex: 1; display: flex; align-items: center; justify-content: center; }
.steps b + b { border-top: 2px solid #78bac6; }
.select { flex: 1; height: 65px; border: 2px solid #78bac6; border-radius: 4px; display: flex; align-items: center; justify-content: space-between; padding: 0 22px 0 20px; letter-spacing: .5px; }
.actions { display: flex; justify-content: flex-end; gap: 39px; margin-top: 45px; }
.actions svg:first-child { margin-right: -8px; }
.result { display: flex; align-items: center; margin-top: 39px; height: 130px; background: #fff; box-shadow: 0 0 32px rgba(0,0,0,.2); padding-left: 25px; font-size: 33px; letter-spacing: .4px; color: #151515; }
.target { stroke-width: 2.3; }
.result-name { margin-left: 23px; flex: 1; }
.result-up { margin: 8px 73px 0 0; color: #000; }
.result-count { width: 60px; font-weight: 600; margin-right: 58px; }
.result-open { width: 53px; height: 60px; border: 4px solid #111; border-radius: 9px; display: flex; align-items: center; justify-content: center; }
.result-open svg { stroke-width: 2.4; }
.lower { flex: 1; display: flex; border-top: 3px solid #001d3a; }
.tip { width: 719px; border-right: 2px solid #001d3a; background: #eaf3f6; padding: 40px 12px 0 9px; font-size: 40px; line-height: 40px; font-style: italic; color: #0f82f0; letter-spacing: 1.2px; }
.tip div { text-align: justify; text-align-last: justify; white-space: nowrap; }
.tip .last { text-align-last: left; }
.tip .upright { font-style: normal; }
.legend { flex: 1; background: #fff; display: flex; }
.legend-body { flex: 1; padding: 27px 0 0 38px; }
.legend h2 { font-size: 34px; line-height: 44px; font-weight: 700; margin-bottom: 21px; letter-spacing: 1.1px; }
.legend p { display: flex; align-items: center; height: 62px; font-size: 31px; padding-left: 40px; }
.legend i.red, .legend i.purple, .legend i.blue { width: 15px; height: 15px; border-radius: 50%; border: 1px solid #555; margin-right: 22px; }
i.red { background: #ed5151; } i.purple { background: #9e559c; } i.blue { background: #149ece; }

.bar { display: flex; flex-direction: column; align-items: center; width: 25px; }
.bar .up { width: 15px; height: 12px; background: #7ebac9; clip-path: polygon(50% 0, 100% 85%, 90% 100%, 10% 100%, 0 85%); }
.bar .down { width: 15px; height: 12px; background: #7ebac9; clip-path: polygon(50% 100%, 100% 15%, 90% 0, 10% 0, 0 15%); margin-top: auto; }
.bar .thumb { width: 15px; border-radius: 8px; background: #7ebac9; }
.page-bar { padding: 14px 0 13px; }
.page-bar .thumb { height: 567px; margin-top: 12px; }
.legend-bar { padding: 13px 0 12px; }
.legend-bar .thumb { height: 132px; margin-top: 12px; }

/* Map */
.map { position: relative; width: 2442px; height: 949px; overflow: hidden; background: #c4ebff; }
.basemap { width: 2442px; height: 949px; stroke: none; }
.land path { fill: url(#land); stroke: #aedcf5; stroke-width: 2.5; vector-effect: non-scaling-stroke; }
.land.mid path { fill: url(#land-mid); }
.land.east path { fill: #f4f3ea; }
.land2 { fill: #f4f4ec; }
.water { fill: #c4ebff; stroke: #aedcf5; stroke-width: 1; }
.basemap .gray path, .casing path, .border, .border-line { fill: none; vector-effect: non-scaling-stroke; stroke-linejoin: round; }
.basemap .gray path { stroke: #c3c2bf; stroke-width: 3.5; }
.basemap .gray.thin path { stroke: #cdccca; stroke-width: 2.6; }
.casing { stroke: #dcd8cb; stroke-width: 7; }
.white { stroke: #fff; stroke-width: 3.6; }
.border { stroke: #dfd5df; stroke-width: 7; }
.border-line { stroke: #9b969c; stroke-width: 1; stroke-dasharray: 14 7; }
.shield path { fill: #fff; stroke: #6a6a6a; stroke-width: 2; }
.shield text { fill: #222; font-family: "Noto Sans", sans-serif; }
.town circle { fill: #fff; stroke: #555; stroke-width: 2.2; }
.peak path { fill: #7b766b; }
.label text { font-family: "Noto Sans", sans-serif; fill: #111; stroke: rgba(255,255,255,.6); stroke-width: 4; paint-order: stroke; stroke-linejoin: round; }
.elev text { font-style: italic; fill: #5e5433; }
.park text { fill: #2f5520; font-size: 23.5px; letter-spacing: .8px; text-anchor: middle; }
.radius { fill: rgba(101,143,199,.357); stroke: #365f92; stroke-width: 5; vector-effect: non-scaling-stroke; stroke-linejoin: round; }
.pin { fill: none; stroke: none; }
.red-pin { marker: url(#m-red); }
.blue-pin { marker: url(#m-blue); }
.purple-pin { marker: url(#m-purple); }
.orange-pin { marker: url(#m-orange); }
.green-pin { marker: url(#m-green); }

.tile, .zoom, .selector, .selected, .compass { background: #fff; box-shadow: 0 2px 5px rgba(0,0,0,.3); }
.tile { width: 80px; height: 80px; display: flex; align-items: center; justify-content: center; }
.tools-left { position: absolute; left: 37px; top: 38px; }
.zoom { width: 80px; height: 162px; margin-bottom: 23px; }
.zoom b { height: 80px; display: flex; align-items: center; justify-content: center; }
.zoom b + b { border-top: 2px solid #78bac6; height: 82px; }
.zoom svg { stroke-width: 2.4; }
.zoom b:first-child svg { margin-left: 3px; }
.tools-left .tile svg { stroke-width: 2.6; }
.compass { width: 80px; height: 80px; border-radius: 50%; margin-top: 25px; display: flex; align-items: center; justify-content: center; }
.compass svg { stroke-width: 2; }
.selector { position: absolute; left: 142px; top: 38px; width: 205px; height: 80px; display: flex; align-items: center; padding-left: 20px; }
.selector svg { stroke-width: 2.6; }
.selector svg + svg { margin-left: 34px; }
.tools-right { position: absolute; right: 37px; top: 38px; display: flex; flex-direction: column; gap: 25px; }
.tools-right svg { stroke-width: 2.6; }
.full { position: absolute; right: 37px; top: 630px; }
.selected { position: absolute; right: 37px; top: 760px; width: 456px; height: 75px; display: flex; align-items: center; padding-left: 38px; gap: 21px; font-size: 35px; letter-spacing: .6px; }
.selected svg { stroke-width: 2.6; }
.selected .t { padding-bottom: 3px; }
.credits { position: absolute; right: 0; top: 885px; width: 1465px; height: 40px; background: rgba(255,255,255,.66); display: flex; align-items: center; padding: 0 0 3px 11px; font-size: 31px; color: #444; box-shadow: 0 1px 3px rgba(0,0,0,.2); }
.sources { width: 1222px; letter-spacing: -.08px; color: #555; }
.corner { position: absolute; right: 0; top: 875px; width: 35px; height: 35px; background: #fff; padding: 6px; }
.scale { position: absolute; left: 15px; top: 860px; width: 260px; font-size: 31px; font-weight: 700; }
.km { width: 260px; height: 45px; border: 4px solid #000; border-top: 0; background: rgba(255,255,255,.5); padding-left: 14px; line-height: 48px; }
.mi { width: 210px; height: 40px; border: solid #000; border-width: 0 4px; background: rgba(255,255,255,.5); padding-left: 14px; line-height: 36px; }

/* Action band */
.band { flex: none; display: flex; align-items: center; margin-top: 26px; height: 199px; background: #3d73a7; border: solid #4aa1b1; border-width: 7px 0; border-style: dashed none; padding: 0 25px 0 141px; }
.band button { font: inherit; font-size: 35px; letter-spacing: .7px; height: 79px; background: #fff; border: 2px solid #78bac6; border-radius: 4px; padding: 0 0 4px; color: #000; display: flex; align-items: center; justify-content: center; }
.check { width: 80px; height: 80px; background: #eaf3f6; border-radius: 4px; padding: 20px; margin-right: 126px; color: #00213f; }
.check svg, .info svg, .print svg { stroke-width: 2.4; }
.band .b1 { width: 278px; margin-right: 20px; }
.band .b2 { width: 292px; margin-right: 20px; }
.band .b3 { width: 287px; }
.band .snap { width: 624px; height: 134px; margin-left: auto; margin-right: 116px; background: #cc6104; color: #eaf3f6; font-size: 63px; font-weight: 700; letter-spacing: .9px; padding-bottom: 9px; }
.info { width: 80px; height: 80px; border-radius: 50%; background: #0067c6; color: #fff; padding: 20px; margin-right: 116px; }
.band .print { width: 312px; height: 135px; border: 7px solid #004e90; border-radius: 37px; background: #0067c6; color: #fff; font-family: "Noto Sans", sans-serif; font-size: 61px; letter-spacing: -1.6px; gap: 19px; justify-content: flex-start; padding: 0 0 0 55px; }
.band .print .t { padding-bottom: 7px; }

/* Results */
.results { margin: 25px 25px 0; flex: 1; background: #c5dfe5; overflow: hidden; }
.finder { height: 105px; display: flex; padding-left: 10px; }
.finder-input { width: 3512px; height: 81px; border-bottom: 2px solid #a4cfd8; display: flex; align-items: center; gap: 22px; padding: 4px 0 0 19px; color: #000; font-size: 35px; letter-spacing: .6px; }
.finder-input svg { stroke-width: 2.4; margin-top: 6px; }
.finder-input .t { color: #5b6d73; padding-bottom: 4px; }
.finder-tools { display: flex; padding: 23px 0 0 10px; }
.finder-tools svg { stroke-width: 2.4; overflow: visible; }
.finder-tools .soft { color: #7cbac7; }
.finder-tools .checks { margin: 7px 25px 0 0; }
.finder-tools .uns { margin: 4px 25px 0 0; }
.finder-tools i { width: 2px; height: 40px; background: #a4cfd8; margin: 2px 20px 0 0; }
.card { height: 360px; background: #eaf3f6; border: 2px solid #4ca3b3; border-radius: 26px 26px 0 0; padding: 6px 0 0 10px; font-size: 43.5px; letter-spacing: 1.25px; }
.card p { height: 64px; line-height: 64px; white-space: pre; }
.card strong { letter-spacing: 1.4px; }
.card .phone { letter-spacing: .3px; }
.card .mail { letter-spacing: 1.8px; }
.card .link { color: #022f5f; }
```
